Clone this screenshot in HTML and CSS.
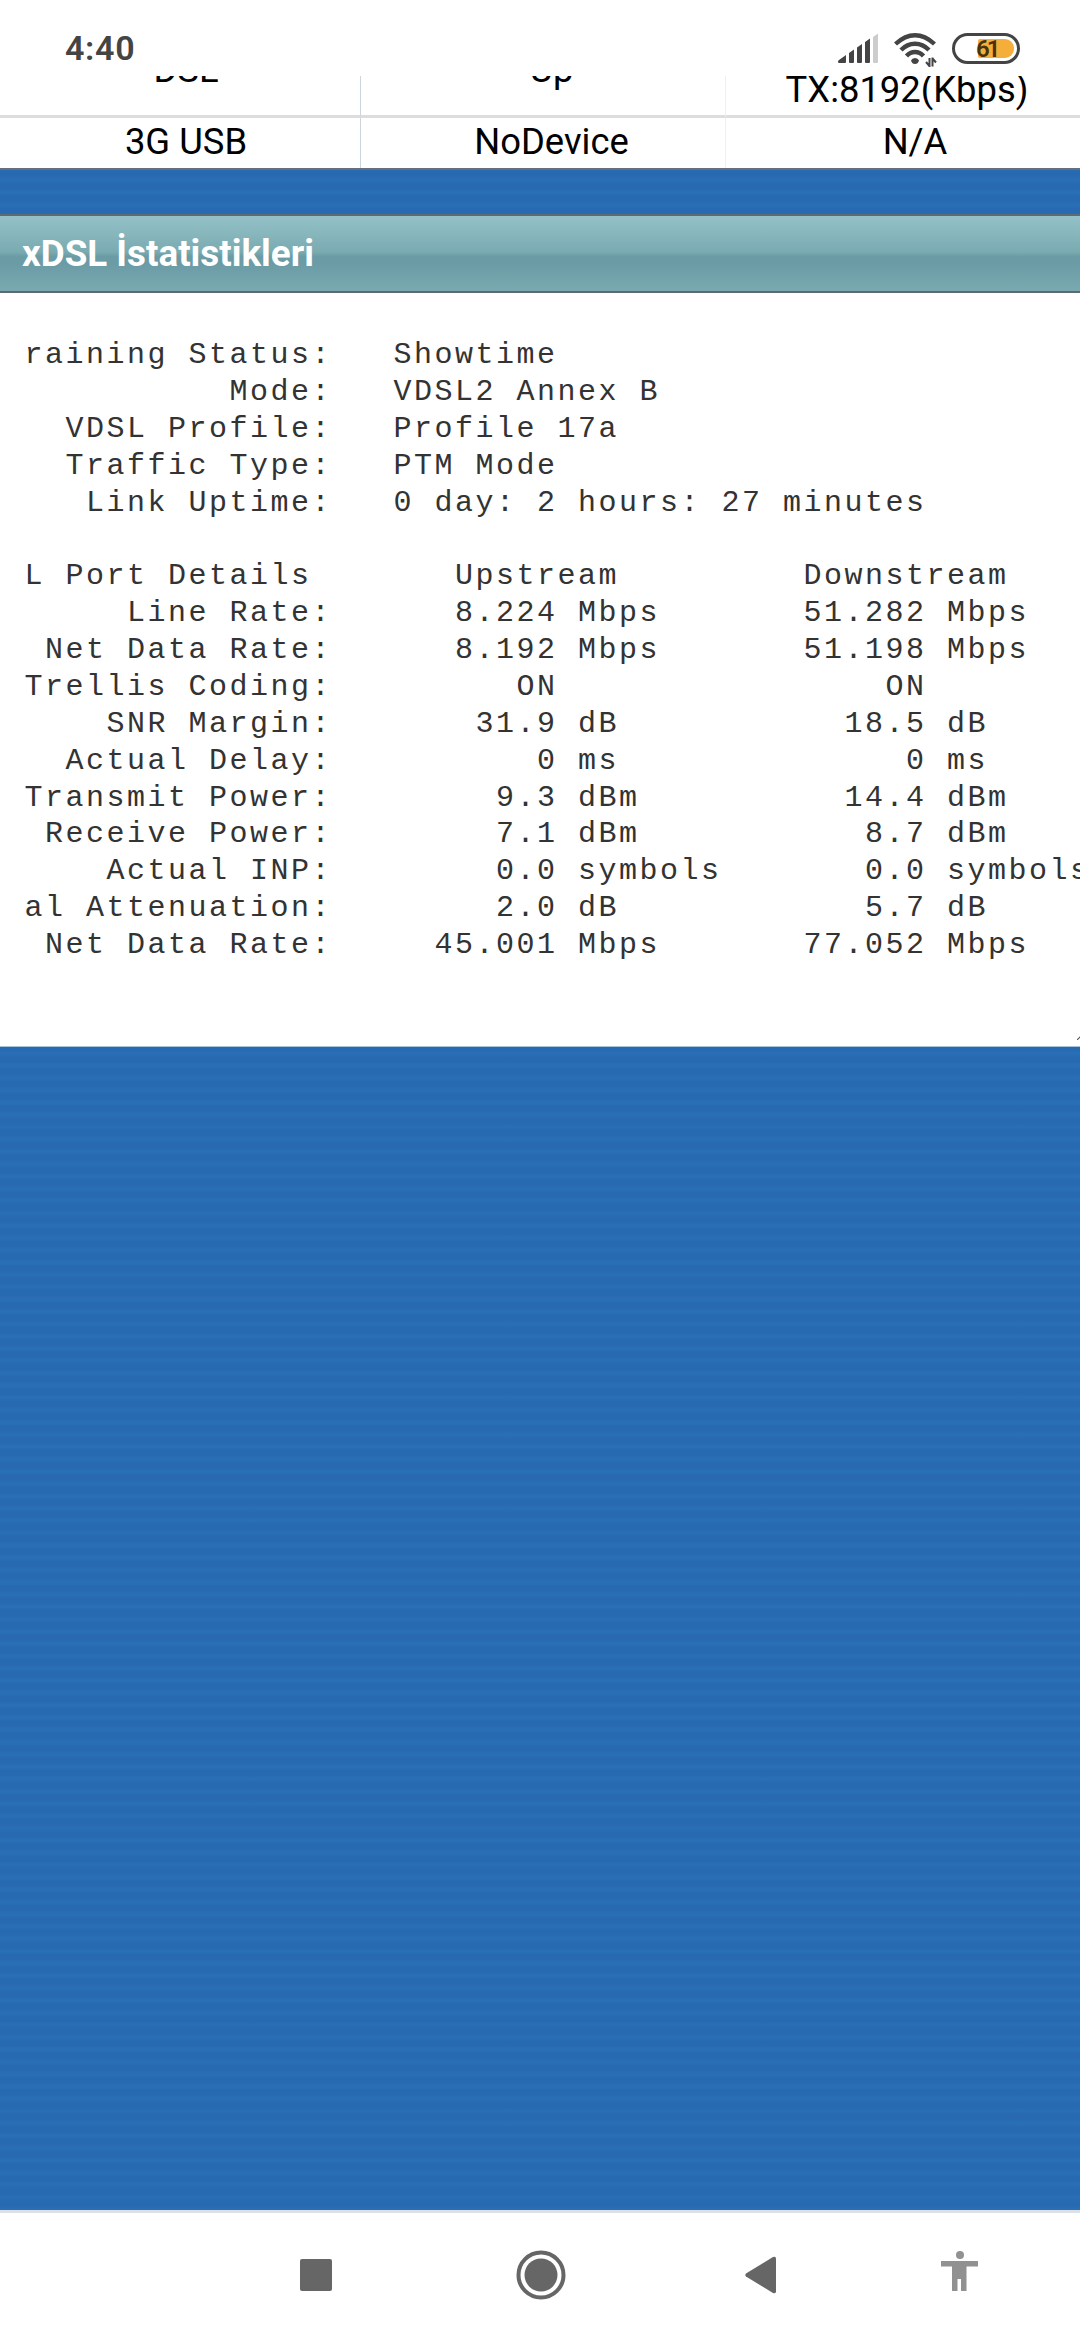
FILE: index.html
```
<!DOCTYPE html>
<html lang="tr">
<head>
  <meta charset="UTF-8">
  <title>xDSL İstatistikleri</title>
  <link rel="stylesheet" href="styles.css">
</head>
<body>
  <div class="status-bar">
    <span class="clock">4:40</span>
    <div class="status-icons">
      <svg class="signal" width="40" height="30" viewBox="0 0 40 30">
        <path fill="#444" d="M1 30q-1 0-1-1.500q0-1 1-1.500l7-5v7q0 1-1 1zM11 20l5-3.500v12.500q0 1-1 1h-3q-1 0-1-1zM19 14.500l5-3.500v18q0 1-1 1h-3q-1 0-1-1zM27 9l5-3.500v23.500q0 1-1 1h-3q-1 0-1-1z"/>
        <path fill="#ccc" d="M35 4l5-3.500v28.500q0 1-1 1h-3q-1 0-1-1z"/>
      </svg>
      <svg class="wifi" width="44" height="34" viewBox="0 0 44 34">
        <g fill="none" stroke="#444" stroke-width="4.400">
          <path d="M1.500 11Q11 2.200 21 2.200T40.500 11"/>
          <path d="M7 17Q13 10.700 21 10.700T35 17"/>
          <path d="M12.500 23Q16 19 21 19T29.500 23"/>
        </g>
        <path fill="#444" d="M17 27.500Q18 25 21 25T25 27.500Q24 31 21 31T17 27.500z"/>
        <path fill="none" stroke="#444" stroke-width="2" d="M35.500 34V25M32 29l3.500 4M38.500 24.500v9M38.500 25.500l3.500 4"/>
      </svg>
      <div class="battery"><span class="battery-fill"></span><span class="battery-level">61</span></div>
    </div>
  </div>

  <div class="page">
    <div class="link-table">
      <div class="cell"><div class="scrolled">DSL</div></div>
      <div class="cell"><div class="scrolled">Up</div></div>
      <div class="cell rate"><div class="last-line">TX:8192(Kbps)</div></div>
      <div class="cell">3G USB</div>
      <div class="cell">NoDevice</div>
      <div class="cell">N/A</div>
    </div>

    <div class="panel">
      <h2 class="panel-title">xDSL İstatistikleri</h2>
      <div class="panel-body">
<pre class="stats">
raining Status:   Showtime
          Mode:   VDSL2 Annex B
  VDSL Profile:   Profile 17a
  Traffic Type:   PTM Mode
   Link Uptime:   0 day: 2 hours: 27 minutes

L Port Details       Upstream         Downstream
     Line Rate:      8.224 Mbps       51.282 Mbps
 Net Data Rate:      8.192 Mbps       51.198 Mbps
Trellis Coding:         ON                ON
    SNR Margin:       31.9 dB           18.5 dB
  Actual Delay:          0 ms              0 ms
Transmit Power:        9.3 dBm          14.4 dBm
 Receive Power:        7.1 dBm           8.7 dBm
    Actual INP:        0.0 symbols       0.0 symbols
al Attenuation:        2.0 dB            5.7 dB
 Net Data Rate:     45.001 Mbps       77.052 Mbps
</pre>
        <svg class="grip" width="3" height="4" viewBox="0 0 3 4"><path stroke="#555" stroke-width="1.200" d="M0 4L4 0"/></svg>
      </div>
    </div>
  </div>

  <div class="nav-bar">
    <svg class="nav-recent" width="32" height="32"><rect width="32" height="32" rx="2" fill="#666"/></svg>
    <svg class="nav-home" width="50" height="50" viewBox="0 0 50 50">
      <circle cx="25" cy="25" r="22.500" fill="none" stroke="#666" stroke-width="4"/>
      <circle cx="25" cy="25" r="16.500" fill="#666"/>
    </svg>
    <svg class="nav-back" width="31" height="38" viewBox="0 0 31 38">
      <path fill="#666" d="M1 17.500L28 1q3-1 3 1.500v33q0 2.500-3 1.500L1 20.500q-1.500-1.500 0-3z"/>
    </svg>
    <svg class="nav-access" width="37" height="40" viewBox="0 0 37 40">
      <circle cx="19" cy="4" r="4" fill="#919191"/>
      <path fill="#919191" d="M0 10h37v5.500H25.500V40H20V28h-3.500v12H11V15.500H0z"/>
    </svg>
  </div>
</body>
</html>
```

FILE: styles.css
```
* {
  box-sizing: border-box;
}
body {
  margin: 0;
  height: 2340px;
  display: flex;
  flex-direction: column;
  overflow: hidden;
  font-family: Roboto, Arial, sans-serif;
  color: #000;
  background: repeating-linear-gradient(#286ab2 0, #286ab2 4px, #2970b6 7.8px, #286ab2 11.6px, #286ab2 12.3px);
}
/* Status bar */
.status-bar {
  height: 76px;
  padding: 0 60px 0 65px;
  display: flex;
  justify-content: space-between;
  background: #fff;
}
.clock {
  margin-top: 28px;
  font-size: 34px;
  line-height: 40px;
  font-weight: 600;
  letter-spacing: 0.7px;
  color: #444;
}
.status-icons {
  display: flex;
  align-items: flex-start;
  padding-top: 33px;
}
.wifi {
  margin-left: 16px;
}
.battery {
  position: relative;
  width: 68px;
  height: 31px;
  margin-left: 14px;
  border: 3px solid #444;
  border-radius: 16px;
}
.battery-fill {
  position: absolute;
  top: 3px;
  right: 3px;
  width: 36px;
  height: 19px;
  border-radius: 2px 9px 9px 2px;
  background: #f6ae3b;
}
.battery-level {
  position: absolute;
  left: 21px;
  top: 0;
  font-size: 24px;
  line-height: 26px;
  font-weight: 600;
  letter-spacing: -3px;
  color: #49320c;
}
/* Page */
.page {
  flex: 1;
  overflow: hidden;
}
.link-table {
  display: grid;
  grid-template-columns: 361px 365px 354px;
  grid-template-rows: 42px 50px;
  background: #fff;
  border-bottom: 2px solid #66707a;
}
.cell {
  padding: 3px 0 0 12px;
  overflow: hidden;
  text-align: center;
  font-size: 36.4px;
  line-height: 42px;
  white-space: nowrap;
  border-right: 1px solid #ccd6df;
}
.cell:nth-child(3n+2) {
  padding-left: 17px;
  border-right-color: #edf1f4;
}
.cell:nth-child(3n) {
  padding-left: 24px;
  border-right: none;
}
.cell:nth-child(-n+3) {
  padding-top: 0;
  border-bottom: 3px solid #ddd;
}
.cell.rate {
  padding-left: 8px;
}
.scrolled {
  margin-top: -27px;
}
.last-line {
  margin-top: -7px;
}
.panel {
  margin-top: 44px;
}
.panel-title {
  margin: 0;
  height: 79px;
  padding-left: 22px;
  border-top: 2px solid #5d6a70;
  border-bottom: 2px solid #5d6a70;
  background: linear-gradient(#94c1c8, #7aabb1 48%, #6b9ba5 54%, #6b9ba5 64%, #7aaab0);
  font-size: 36.8px;
  line-height: 75px;
  font-weight: 700;
  color: #fff;
}
.panel-body {
  position: relative;
  height: 754px;
  padding: 44px 0 0 24.4px;
  overflow: hidden;
  background: #fff;
  border-bottom: 1px solid #a8c4da;
}
.stats {
  margin: 0;
  font-family: "Liberation Mono", monospace;
  font-size: 30px;
  line-height: 36.875px;
  letter-spacing: 2.5px;
  color: #333;
}
.grip {
  position: absolute;
  right: 0;
  bottom: 6px;
}
/* Navigation bar */
.nav-bar {
  height: 130px;
  padding: 0 102px 4px 300px;
  display: flex;
  align-items: center;
  background: #fff;
  border-top: 3px solid #dde0e6;
}
.nav-home {
  margin-left: 184px;
}
.nav-back {
  margin-left: 179px;
}
.nav-access {
  margin-left: 165px;
  margin-top: -7px;
}
```
